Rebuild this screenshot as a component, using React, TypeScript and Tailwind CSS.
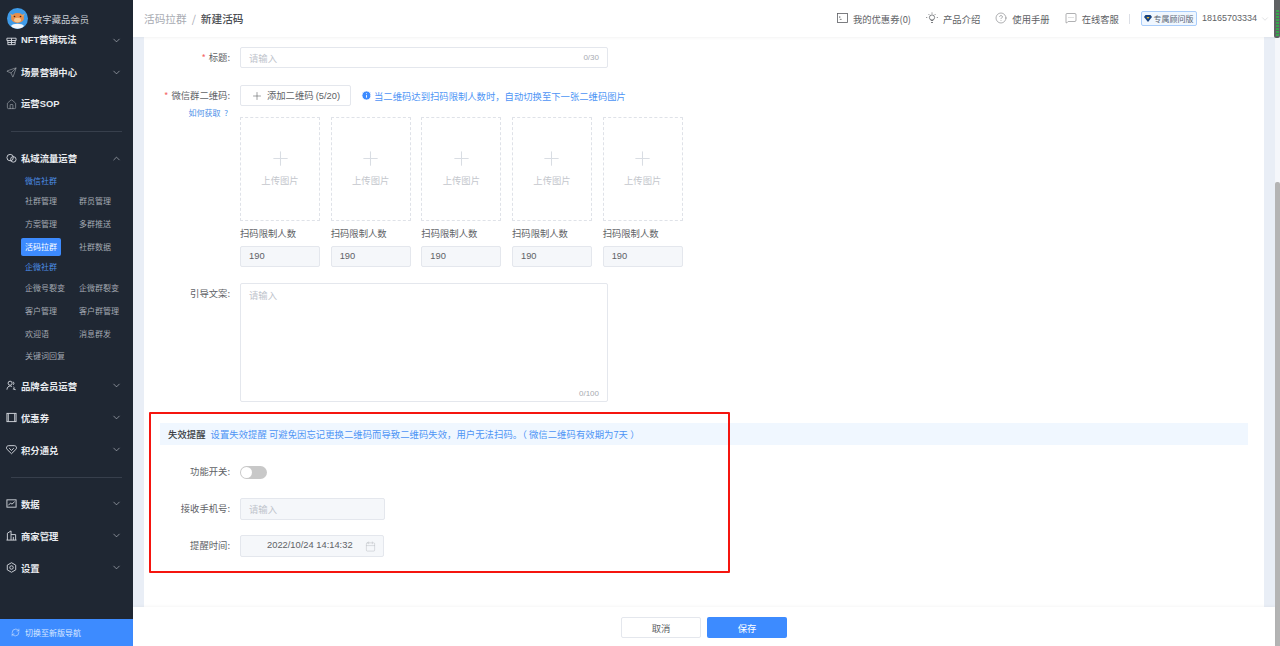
import { Calendar, ChevronDown, ChevronUp, CircleHelp, House, Info, MessageSquareMore, Plus, RefreshCw, Send } from "lucide-react";
import type { ReactNode } from "react";

const font = { fontFamily: '"Noto Sans CJK SC", "Liberation Sans", sans-serif' };

const BoxIcon = () => (
  <svg width="11" height="11" viewBox="0 0 12 12" fill="none" stroke="currentColor" strokeWidth="1">
    <path d="M1 3.5h10v2.5H1zM2 6v4.5h8V6M6 3.5v7M2 8.2h8" />
  </svg>
);

const TicketIcon = () => (
  <svg width="11" height="11" viewBox="0 0 12 12" fill="none" stroke="currentColor" strokeWidth="1">
    <rect x="1" y="1.5" width="10" height="9" />
    <path d="M2.5 1.5v9M9.5 1.5v9" />
  </svg>
);

const TopCouponIcon = () => (
  <svg width="11" height="10" viewBox="0 0 12 11" fill="none" stroke="currentColor" strokeWidth="0.9">
    <rect x="0.5" y="0.5" width="11" height="10" />
    <path d="M3 3.5v2M3 7h2" />
  </svg>
);

const BulbIcon = () => (
  <svg width="12" height="12" viewBox="0 0 12 12" fill="none" stroke="currentColor" strokeWidth="0.8">
    <circle cx="6" cy="5.5" r="2.6" />
    <path d="M4.8 8.5h2.4M5 10.5h2M6 .5v1.2M1.2 5.5H.2M11.8 5.5h-1M2.4 2l.8.8M9.6 2l-.8.8" />
  </svg>
);

const ChatsIcon = () => (
  <svg width="11" height="11" viewBox="0 0 12 12" fill="none" stroke="currentColor" strokeWidth="1">
    <circle cx="4.5" cy="5" r="3.5" />
    <circle cx="8" cy="7" r="3" />
  </svg>
);

const PeopleIcon = () => (
  <svg width="11" height="11" viewBox="0 0 12 12" fill="none" stroke="currentColor" strokeWidth="1">
    <circle cx="4.5" cy="3.5" r="2.2" />
    <path d="M1 10.5c.3-2.5 1.7-4 3.5-4 .8 0 1.5.3 2 .8" />
    <path d="M7.5 2c1.3.4 1.6 2.3.5 3.2M8 7.5l1.2 1L8 10l2.5.5" />
  </svg>
);

const GemIcon = () => (
  <svg width="11" height="11" viewBox="0 0 12 12" fill="none" stroke="currentColor" strokeWidth="1">
    <path d="M3 1.8h6c1.5 0 2.5 1 2.5 2.4 0 .7-.3 1.3-.8 1.8L6 10.6 1.3 6c-.5-.5-.8-1.1-.8-1.8C.5 2.8 1.5 1.8 3 1.8z" />
    <path d="M3.5 4.6L6 7l2.5-2.4" />
  </svg>
);

const ChartIcon = () => (
  <svg width="11" height="11" viewBox="0 0 12 12" fill="none" stroke="currentColor" strokeWidth="1">
    <rect x="1" y="2" width="10" height="8" />
    <path d="M2.5 8l2.5-2.5 1.5 1.2L9.5 4" />
  </svg>
);

const ShopIcon = () => (
  <svg width="11" height="11" viewBox="0 0 12 12" fill="none" stroke="currentColor" strokeWidth="1">
    <path d="M1.5 11V3.5l4-2.5v10M5.5 5h5v6M.5 11h11" />
    <path d="M8 7.5V11" />
  </svg>
);

const GearIcon = () => (
  <svg width="11" height="11" viewBox="0 0 12 12" fill="none" stroke="currentColor" strokeWidth="1">
    <path d="M6 .8l4.6 2.6v5.2L6 11.2 1.4 8.6V3.4z" />
    <circle cx="6" cy="6" r="1.9" />
  </svg>
);

const Avatar = () => (
  <svg width="21" height="21" viewBox="0 0 42 42">
    <circle cx="21" cy="21" r="21" fill="#3f9be8" />
    <path d="M8 36c3-6 23-6 26 0-6 7-20 7-26 0z" fill="#f2f6fb" />
    <ellipse cx="21" cy="20" rx="13" ry="10" fill="#e98e4a" />
    <path d="M6 11l7 4-3 3zM36 11l-7 4 3 3z" fill="#e9a45f" />
    <ellipse cx="21" cy="24" rx="7" ry="4.5" fill="#f7c78f" />
    <circle cx="15" cy="17" r="1.6" fill="#3a2413" />
    <circle cx="27" cy="17" r="1.6" fill="#3a2413" />
  </svg>
);

const NavItem = ({ icon, label, open }: { icon: ReactNode; label: ReactNode; open?: boolean }) => (
  <div className="flex h-8 items-center pl-[6px] pr-[11px] text-[#d5d9df]">
    <span className="flex w-[15px] shrink-0">{icon}</span>
    <span className="flex-1 text-[9.33px] font-bold text-[#e8ebef]">{label}</span>
    {open === undefined ? null : open ? (
      <ChevronUp size={11} strokeWidth={1.2} />
    ) : (
      <ChevronDown size={11} strokeWidth={1.2} />
    )}
  </div>
);

const SubGroup = ({ title, rows }: { title: string; rows: string[] }) => (
  <div>
    <div className="flex h-[19px] items-center pl-[25px] text-[8px] text-[#4d8fe8]">{title}</div>
    <div className="grid grid-cols-[54px_1fr] pl-[25px]">
      {rows.map((item) => (
        <div key={item} className="relative flex h-[22.67px] items-center text-[8px] text-[#a3a9b2]">
          {item === "活码拉群" && (
            <span className="absolute top-[3px] left-[-4px] h-[18px] w-[40px] rounded-[2px] bg-[#3d8bff]" />
          )}
          <span className={item === "活码拉群" ? "relative text-white" : ""}>{item}</span>
        </div>
      ))}
    </div>
  </div>
);

const Sidebar = () => (
  <aside className="flex h-full w-[133px] shrink-0 flex-col bg-[#1f2733]">
    <div className="relative z-10 flex h-[32px] shrink-0 items-start gap-[5px] bg-[#1f2733] pt-[8px] pl-[7px]">
      <Avatar />
      <span className="mt-[5px] text-[9.33px] leading-[12px] text-[#c9ced6]">数字藏品会员</span>
    </div>
    <nav className="mt-[-8px] flex-1">
      <NavItem icon={<BoxIcon />} label={<><span className="font-['Liberation_Sans',sans-serif]">NFT</span>营销玩法</>} open={false} />
      <NavItem icon={<Send size={11} strokeWidth={1} />} label="场景营销中心" open={false} />
      <NavItem icon={<House size={11} strokeWidth={1} />} label={<>运营<span className="font-['Liberation_Sans',sans-serif]">SOP</span></>} />
      <div className="mx-[11px] mt-[11px] mb-[10px] h-px bg-[#373f4c]" />
      <NavItem icon={<ChatsIcon />} label="私域流量运营" open={true} />
      <div className="mt-[-3px] pb-[2px]">
        <SubGroup title="微信社群" rows={["社群管理", "群员管理", "方案管理", "多群推送", "活码拉群", "社群数据"]} />
        <SubGroup title="企微社群" rows={["企微号裂变", "企微群裂变", "客户管理", "客户群管理", "欢迎语", "消息群发", "关键词回复"]} />
      </div>
      <NavItem icon={<PeopleIcon />} label="品牌会员运营" open={false} />
      <NavItem icon={<TicketIcon />} label="优惠券" open={false} />
      <NavItem icon={<GemIcon />} label="积分通兑" open={false} />
      <div className="mx-[11px] mt-[11px] mb-[10px] h-px bg-[#373f4c]" />
      <NavItem icon={<ChartIcon />} label="数据" open={false} />
      <NavItem icon={<ShopIcon />} label="商家管理" open={false} />
      <NavItem icon={<GearIcon />} label="设置" open={false} />
    </nav>
    <div className="flex h-[27px] shrink-0 items-center gap-[5px] bg-[#3d8bff] pl-[11px] text-[8px] text-[#dbe9ff]">
      <RefreshCw size={9} strokeWidth={1.5} />
      切换至新版导航
    </div>
  </aside>
);

const TopLink = ({ icon, label }: { icon: ReactNode; label: string }) => (
  <div className="flex items-center gap-[5px] text-[#606266]">
    {icon}
    <span className="text-[9.33px]">{label}</span>
  </div>
);

const TopBar = () => (
  <header className="relative z-10 flex h-[37px] shrink-0 items-center justify-between bg-white pr-[5px] pl-[11px] shadow-[0_1px_3px_rgba(0,0,0,0.05)]">
    <div className="flex items-center text-[10.67px]">
      <span className="text-[#a8abb2]">活码拉群</span>
      <span className="mx-[5px] text-[#a8abb2]">/</span>
      <span className="font-medium text-[#4a4d52]">新建活码</span>
    </div>
    <div className="flex items-center">
      <div className="flex items-center gap-[15px]">
        <TopLink icon={<TopCouponIcon />} label="我的优惠券(0)" />
        <TopLink icon={<BulbIcon />} label="产品介绍" />
        <TopLink icon={<CircleHelp size={12} strokeWidth={1} />} label="使用手册" />
        <TopLink icon={<MessageSquareMore size={12} strokeWidth={1} />} label="在线客服" />
      </div>
      <div className="mr-[11px] ml-[10px] h-[10px] w-px bg-[#dcdfe6]" />
      <div className="flex h-[15px] w-[56px] items-center justify-center gap-[1px] rounded-[2px] border border-[#a9cdfb] bg-[#f0f7ff] text-[8px] text-[#5a6472]">
        <svg width="8" height="7" viewBox="0 0 8 7" className="shrink-0">
          <path d="M1.5 0h5L8 2 4 7 0 2z" fill="#17427f" />
          <path d="M2.5 2h3L4 4z" fill="#f4b92f" />
        </svg>
        专属顾问版
      </div>
      <span className="ml-[5px] font-['Liberation_Sans',sans-serif] text-[9px] text-[#606266]">18165703334</span>
      <ChevronDown size={10} strokeWidth={1} className="ml-[3px] text-[#b5b8be]" />
    </div>
  </header>
);

const Label = ({ text, required }: { text: string; required?: boolean }) => (
  <div className="w-[86px] shrink-0 text-right text-[9.33px] leading-[21px] text-[#606266]">
    {required && <span className="mr-[3px] text-[#f56c6c]">*</span>}
    {text}:
  </div>
);

// labels of the lower block sit 1px higher in their row
const TightLabel = ({ text }: { text: string }) => (
  <div className="h-[21px] w-[86px] shrink-0 text-right text-[9.33px] leading-[19px] text-[#606266]">{text}:</div>
);

const UploadColumn = () => (
  <div className="w-[80px] shrink-0">
    <div className="flex h-[104px] flex-col items-center rounded-[1px] border border-dashed border-[#dfe2e8] pt-[29px]">
      <Plus size={23} strokeWidth={1.1} className="text-[#d9dde3]" />
      <span className="mt-[3px] text-[9.33px] text-[#c4c7cd]">上传图片</span>
    </div>
    <div className="mt-[5px] h-[19px] text-[9.33px] leading-[14px] text-[#606266]">扫码限制人数</div>
    <div className="mt-[1px] flex h-[21px] items-center rounded-[2px] border border-[#e4e7ed] bg-[#f5f7fa] pl-[8px] font-['Liberation_Sans',sans-serif] text-[9.33px] text-[#606266]">
      190
    </div>
  </div>
);

const Form = () => (
  <div className="relative h-[1200px] w-[1120px] shrink-0 bg-white pt-[10px]">
    <div className="flex gap-[10px]">
      <Label text="标题" required />
      <div className="flex h-[21px] w-[368px] items-center justify-between rounded-[2px] border border-[#e4e7ed] px-[8px] text-[9.33px] text-[#c0c4cc]">
        <span>请输入</span>
        <span className="font-['Liberation_Sans',sans-serif] text-[8px] text-[#a8abb2]">0/30</span>
      </div>
    </div>

    <div className="mt-[17px] flex gap-[10px]">
      <div className="w-[86px] shrink-0">
        <Label text="微信群二维码" required />
        <div className="pr-[2px] text-right text-[8px] leading-[14px] text-[#4d8fe8]">如何获取&nbsp;&nbsp;?</div>
      </div>
      <div>
        <div className="flex items-center">
          <div className="flex h-[21px] w-[111px] items-center justify-center gap-[4px] rounded-[2px] border border-[#e4e7ed] text-[9.33px] text-[#606266]">
            <Plus size={12} strokeWidth={1.2} />
            <span>添加二维码 <span className="font-['Liberation_Sans',sans-serif]">(5/20)</span></span>
          </div>
          <Info size={11} fill="#3d8bff" stroke="#ffffff" strokeWidth={2} className="ml-[10px]" />
          <span className="ml-[2px] text-[9.33px] text-[#4d94f5]">当二维码达到扫码限制人数时，自动切换至下一张二维码图片</span>
        </div>
        <div className="mt-[11px] flex gap-[10.67px]">
          <UploadColumn />
          <UploadColumn />
          <UploadColumn />
          <UploadColumn />
          <UploadColumn />
        </div>
      </div>
    </div>

    <div className="mt-[16px] flex gap-[10px]">
      <Label text="引导文案" />
      <div className="flex h-[119px] w-[368px] flex-col justify-between rounded-[2px] border border-[#e4e7ed] px-[8px] pt-[4px] pb-[1px] text-[9.33px] text-[#c0c4cc]">
        <span>请输入</span>
        <span className="self-end font-['Liberation_Sans',sans-serif] text-[8px] text-[#a8abb2]">0/100</span>
      </div>
    </div>

    <div className="mx-[16px] mt-[21px] flex h-[22px] items-center gap-[5px] bg-[#f0f7ff] pl-[8px] text-[9.33px] tracking-[0.05px] text-[#4d94f5]">
      <span className="font-medium text-[#3a3d42]">失效提醒</span>
      设置失效提醒 可避免因忘记更换二维码而导致二维码失效，用户无法扫码。（ 微信二维码有效期为7天 ）
    </div>

    <div className="mt-[17px] flex items-center gap-[10px]">
      <TightLabel text="功能开关" />
      <div className="flex h-[13px] w-[27px] items-center justify-start rounded-full bg-[#c8c8c8] pl-[1px]">
        <span className="h-[11px] w-[11px] rounded-full bg-white" />
      </div>
    </div>

    <div className="mt-[15px] flex items-center gap-[10px]">
      <TightLabel text="接收手机号" />
      <div className="flex h-[22px] w-[145px] items-center rounded-[2px] border border-[#e4e7ed] bg-[#f5f7fa] pl-[8px] text-[9.33px] text-[#c0c4cc]">
        请输入
      </div>
    </div>

    <div className="mt-[15px] flex items-center gap-[10px]">
      <TightLabel text="提醒时间" />
      <div className="flex h-[22px] w-[144px] items-center justify-between rounded-[2px] border border-[#e4e7ed] bg-[#f5f7fa] pr-[7px] pl-[26px] font-['Liberation_Sans',sans-serif] text-[9.33px] text-[#606266]">
        2022/10/24 14:14:32
        <Calendar size={11} strokeWidth={1} className="text-[#b5b8be]" />
      </div>
    </div>

    {/* annotation drawn on top of the screenshot */}
    <div className="absolute top-[375px] left-[5px] h-[161px] w-[581px] rounded-[1px] border-2 border-[#f5150f]" />
  </div>
);

const Footer = () => (
  <footer className="relative z-10 flex h-[39px] shrink-0 items-center justify-center gap-[6px] bg-white pt-[2px] shadow-[0_-1px_3px_rgba(0,0,0,0.04)]">
    <div className="flex h-[21px] w-[80px] items-center justify-center rounded-[2px] border border-[#e4e7ed] text-[9.33px] text-[#606266]">取消</div>
    <div className="flex h-[21px] w-[80px] items-center justify-center rounded-[2px] bg-[#3d8bff] text-[9.33px] text-white">保存</div>
  </footer>
);

const ScrollTrack = () => (
  <div className="relative w-[5px] shrink-0 bg-[#f5f7fb]">
    <div className="absolute top-0 right-0 left-[-1px] z-20 flex h-[38px] flex-col items-center gap-[1px] rounded-b-[2px] bg-[#5f6264] pt-[10px]">
      {Array.from({ length: 9 }).map((_, i) => (
        <span key={i} className="h-[2px] w-[3px] bg-[#37a64c]" />
      ))}
    </div>
    <div className="mt-[182px] h-[464px] rounded-t-[2px] bg-[#b4b4b4]" />
  </div>
);

export default function App() {
  return (
    <div className="flex h-screen w-full overflow-hidden bg-white" style={font}>
      <Sidebar />
      <main className="flex h-full min-w-0 flex-1 flex-col">
        <TopBar />
        <div className="flex min-h-0 flex-1 justify-center overflow-hidden bg-[#e9eef6]">
          <Form />
        </div>
        <Footer />
      </main>
      <ScrollTrack />
    </div>
  );
}
